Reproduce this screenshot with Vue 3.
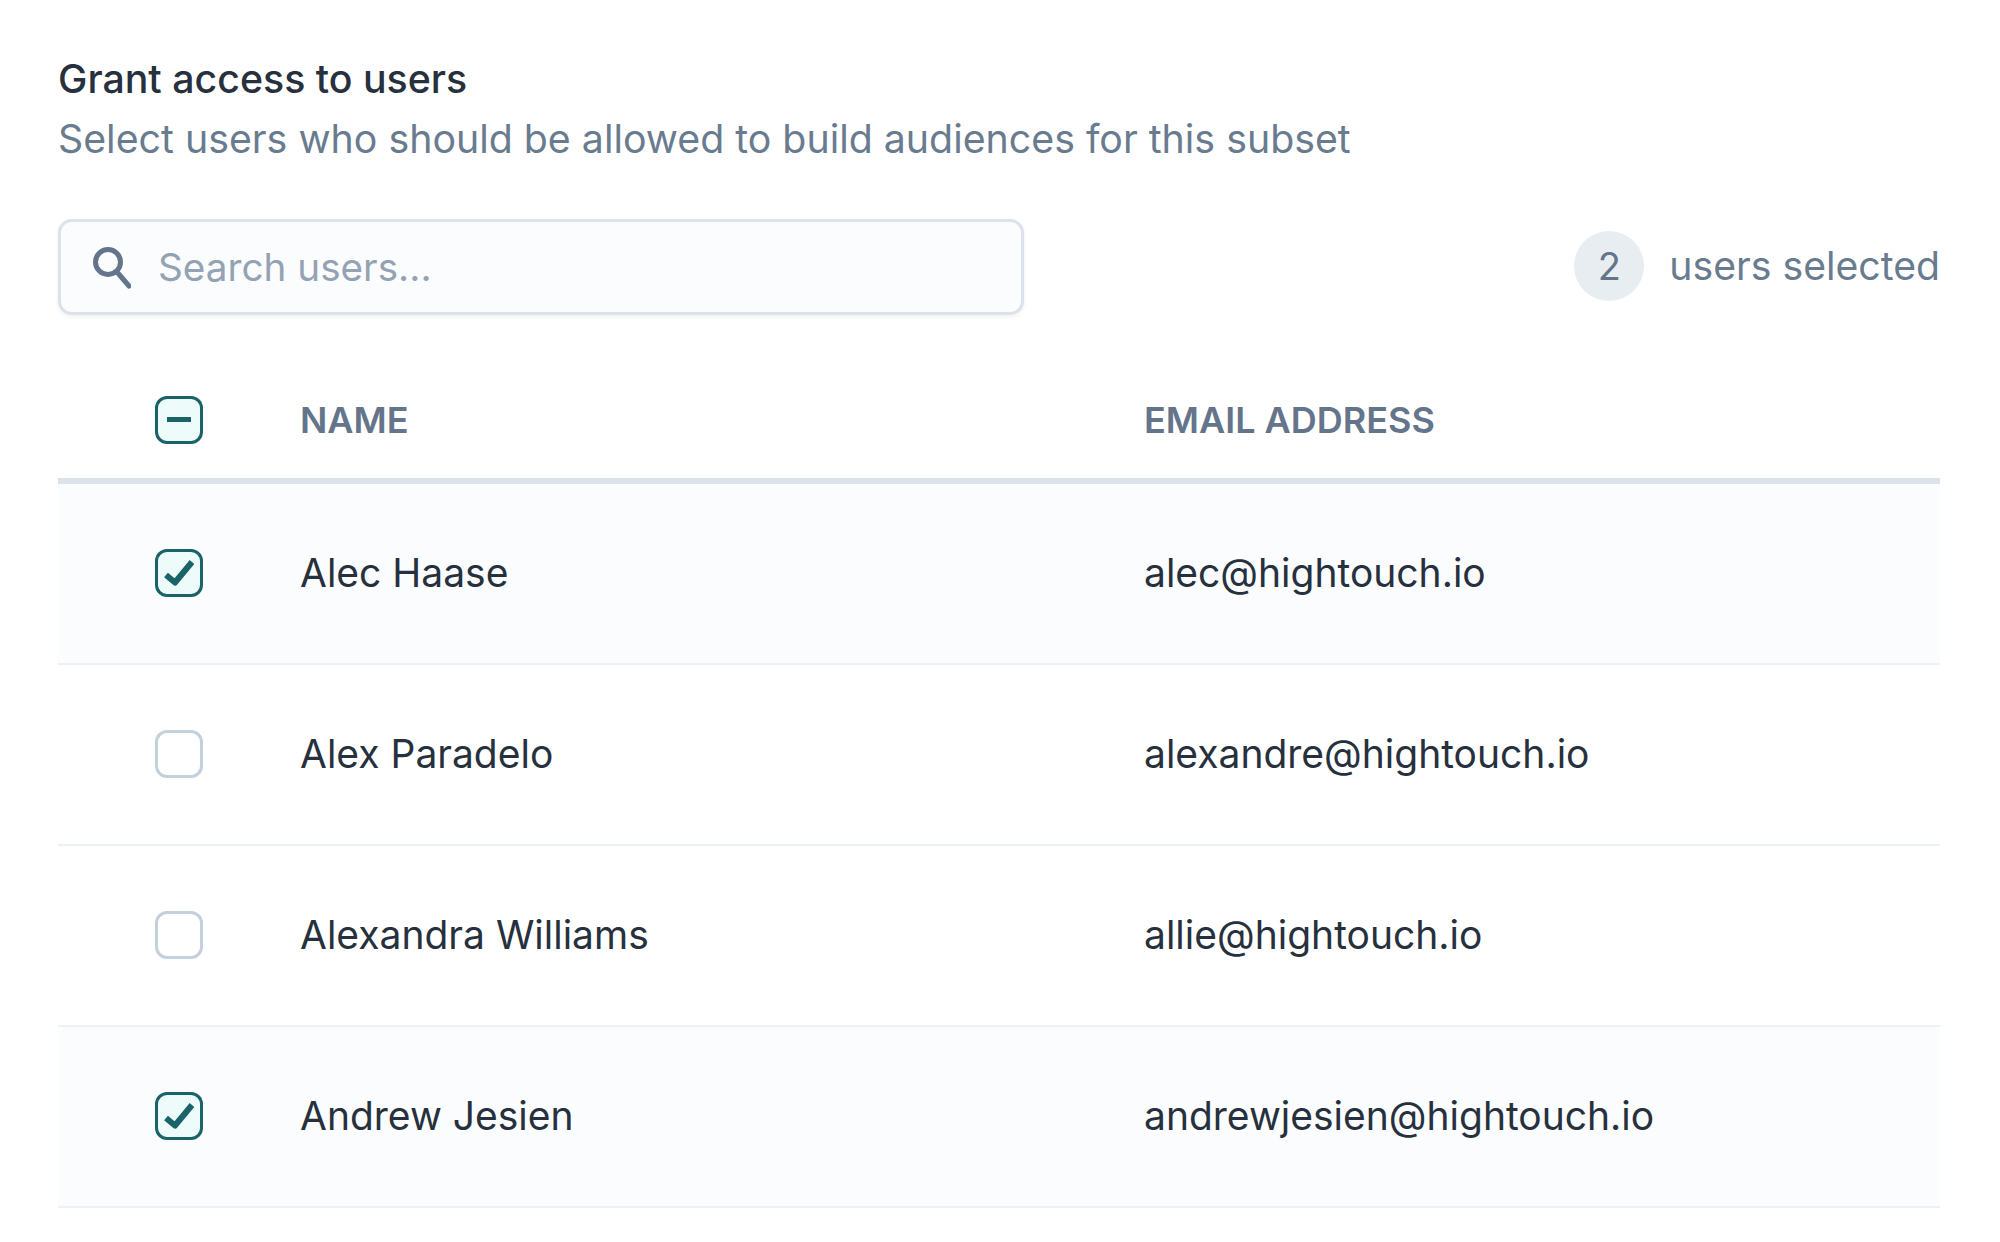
<script setup>
const users = [
  { name: 'Alec Haase', email: 'alec@hightouch.io', selected: true },
  { name: 'Alex Paradelo', email: 'alexandre@hightouch.io', selected: false },
  { name: 'Alexandra Williams', email: 'allie@hightouch.io', selected: false },
  { name: 'Andrew Jesien', email: 'andrewjesien@hightouch.io', selected: true },
]
</script>

<template>
  <div class="page">
    <h2 class="title">Grant access to users</h2>
    <p class="subtitle">Select users who should be allowed to build audiences for this subset</p>

    <div class="toolbar">
      <div class="search">
        <svg class="search-icon" viewBox="0 0 40 44" fill="none" stroke="#64748b">
          <circle cx="17" cy="17" r="12.5" stroke-width="5" />
          <path d="M26 27 L38 41" stroke-width="5" stroke-linecap="round" />
        </svg>
        <span class="placeholder">Search users...</span>
      </div>
      <div class="count">
        <span class="count-badge">2</span>
        <span class="count-label">users selected</span>
      </div>
    </div>

    <div class="row head">
      <div class="cell-check">
        <span class="checkbox on">
          <svg viewBox="0 0 48 48" class="mark">
            <rect x="12" y="21" width="24" height="5" fill="#1a6369" />
          </svg>
        </span>
      </div>
      <div class="cell-name">NAME</div>
      <div class="cell-email">EMAIL ADDRESS</div>
    </div>

    <div v-for="u in users" :key="u.email" class="row" :class="{ selected: u.selected }">
      <div class="cell-check">
        <span class="checkbox" :class="{ on: u.selected }">
          <svg v-if="u.selected" viewBox="0 0 48 48" class="mark">
            <path d="M11 26 L20 33.5 L37 13" fill="none" stroke="#1a6369" stroke-width="6" stroke-linejoin="round" />
          </svg>
        </span>
      </div>
      <div class="cell-name">{{ u.name }}</div>
      <div class="cell-email">{{ u.email }}</div>
    </div>
  </div>
</template>

<style>
body {
  background: #fff;
}
</style>

<style scoped>
.page {
  width: 1882px;
  height: 1187px;
  padding: 55px 60px 0 58px;
  font-family: Inter, "Liberation Sans", sans-serif;
  overflow: hidden;
}

.title {
  margin: 0;
  font-size: 39.3px;
  line-height: 48px;
  font-weight: 500;
  color: #27303d;
}

.subtitle {
  margin: 12px 0 0;
  font-size: 39.3px;
  line-height: 48px;
  color: #697b8f;
}

.toolbar {
  display: flex;
  justify-content: space-between;
  align-items: center;
  margin-top: 56px;
}

.search {
  width: 966px;
  height: 96px;
  box-sizing: border-box;
  display: flex;
  align-items: center;
  padding-left: 30px;
  gap: 27px;
  background: #fbfcfe;
  border: 3px solid #dbe2ea;
  border-radius: 14px;
  box-shadow: 0 2px 4px rgba(30, 41, 59, 0.06);
}

.search-icon {
  width: 40px;
  height: 44px;
}

.placeholder {
  font-size: 38.7px;
  color: #94a3b3;
}

.count {
  display: flex;
  align-items: center;
  gap: 25px;
  margin-top: -2px;
}

.count-badge {
  width: 70px;
  height: 70px;
  border-radius: 50%;
  background: #e8edf2;
  color: #64748b;
  font-size: 38px;
  display: flex;
  align-items: center;
  justify-content: center;
}

.count-label {
  font-size: 39.2px;
  line-height: 46px;
  color: #697b8f;
}

.row {
  display: flex;
  align-items: center;
  height: 181px;
  box-sizing: border-box;
  padding-bottom: 2px;
  border-bottom: 2px solid #edf0f4;
  font-size: 39px;
  color: #27303d;
}

.row.selected {
  background: #fbfcfe;
}

.row.head {
  height: 122px;
  margin-top: 47px;
  padding-bottom: 1px;
  border-bottom: 6px solid #dbe2ea;
  font-size: 36px;
  font-weight: 600;
  color: #64748b;
}

.cell-check {
  width: 242px;
  padding-left: 97px;
  box-sizing: border-box;
  display: flex;
}

.cell-name {
  width: 844px;
}

.checkbox {
  width: 48px;
  height: 48px;
  box-sizing: border-box;
  border: 3px solid #c5d0dd;
  border-radius: 12px;
  background: #fff;
  position: relative;
}

.checkbox.on {
  border-color: #1a6369;
  background: #eefbfb;
}

.mark {
  position: absolute;
  left: -3px;
  top: -3px;
  width: 48px;
  height: 48px;
}
</style>
